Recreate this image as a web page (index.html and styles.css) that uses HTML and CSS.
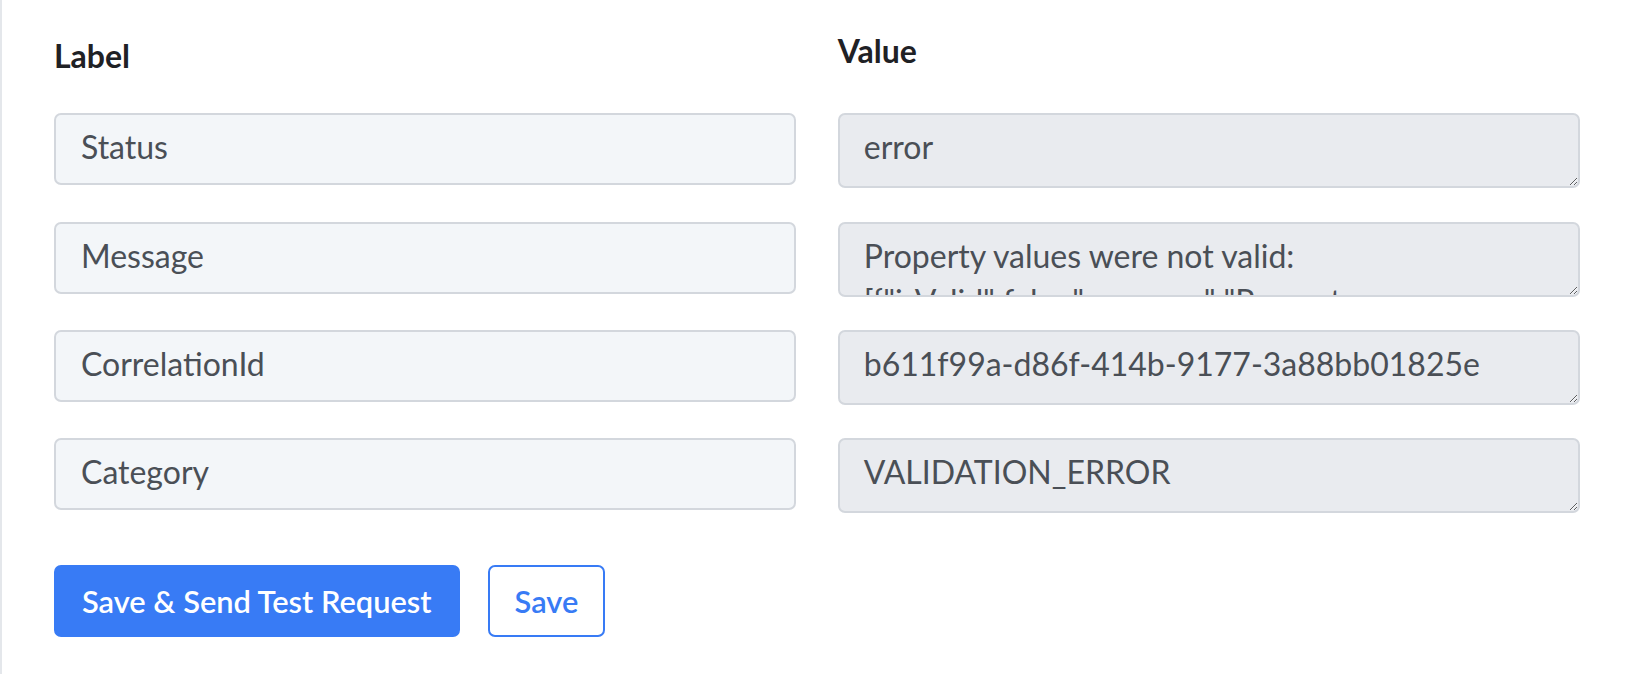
FILE: index.html
```html
<!DOCTYPE html>
<html lang="en">
<head>
<meta charset="utf-8">
<title>Response mapping</title>
<link rel="stylesheet" href="styles.css">
</head>
<body>
<div class="panel">
  <div class="mapping">
    <div class="col-head col-head--label">Label</div>
    <div class="col-head">Value</div>

    <input class="field-label" type="text" value="Status">
    <textarea class="field-value" readonly>error</textarea>

    <input class="field-label" type="text" value="Message">
    <textarea class="field-value" readonly>Property values were not valid: [{"isValid":false,"message":"Property \"company_size\" does not exist","error":"PROPERTY_DOESNT_EXIST","name":"company_size"}]</textarea>

    <input class="field-label" type="text" value="CorrelationId">
    <textarea class="field-value" readonly>b611f99a-d86f-414b-9177-3a88bb01825e</textarea>

    <input class="field-label" type="text" value="Category">
    <textarea class="field-value" readonly>VALIDATION_ERROR</textarea>
  </div>

  <div class="actions">
    <button class="btn btn--primary" type="button">Save &amp; Send Test Request</button>
    <button class="btn btn--outline" type="button">Save</button>
  </div>
</div>
</body>
</html>
```

FILE: styles.css
```css
* {
  box-sizing: border-box;
}

html, body {
  margin: 0;
  background: #ffffff;
}

body {
  font-family: Lato, "Liberation Sans", sans-serif;
  color: #4a4f56;
}

.panel {
  min-height: 674px;
  border-left: 2px solid #e4e7eb;
  padding: 32px 56px 0 52px;
}

.mapping {
  display: grid;
  grid-template-columns: 1fr 1fr;
  column-gap: 41.5px;
  row-gap: 33.33px;
  align-items: start;
}

.col-head {
  font-size: 32px;
  line-height: 38px;
  font-weight: 700;
  color: #1f2125;
  margin-bottom: 5px;
}

.col-head--label {
  padding-top: 5px;
}

.field-label,
.field-value {
  display: block;
  width: 100%;
  margin: 0;
  font-family: inherit;
  font-size: 32px;
  color: #4a4f56;
  border: 2px solid #d3d7dd;
  border-radius: 7px;
  outline: none;
}

.field-label {
  height: 72px;
  padding: 0 25px 5px;
  background: #f3f6f9;
}

.field-value {
  height: 75px;
  padding: 9px 24px 0;
  line-height: 45px;
  background: #e9ebef;
  overflow: hidden;
  resize: vertical;
}

.actions {
  display: flex;
  gap: 28px;
  margin-top: 51.7px;
}

.btn {
  height: 72px;
  padding: 0 26px;
  font-family: inherit;
  font-size: 30.8px;
  font-weight: 600;
  border-radius: 7px;
  cursor: pointer;
}

.btn--primary {
  background: #387bf5;
  border: 2px solid #387bf5;
  color: #ffffff;
}

.btn--outline {
  background: #ffffff;
  border: 2px solid #387bf5;
  color: #387bf5;
  padding: 0 25px;
}
```
